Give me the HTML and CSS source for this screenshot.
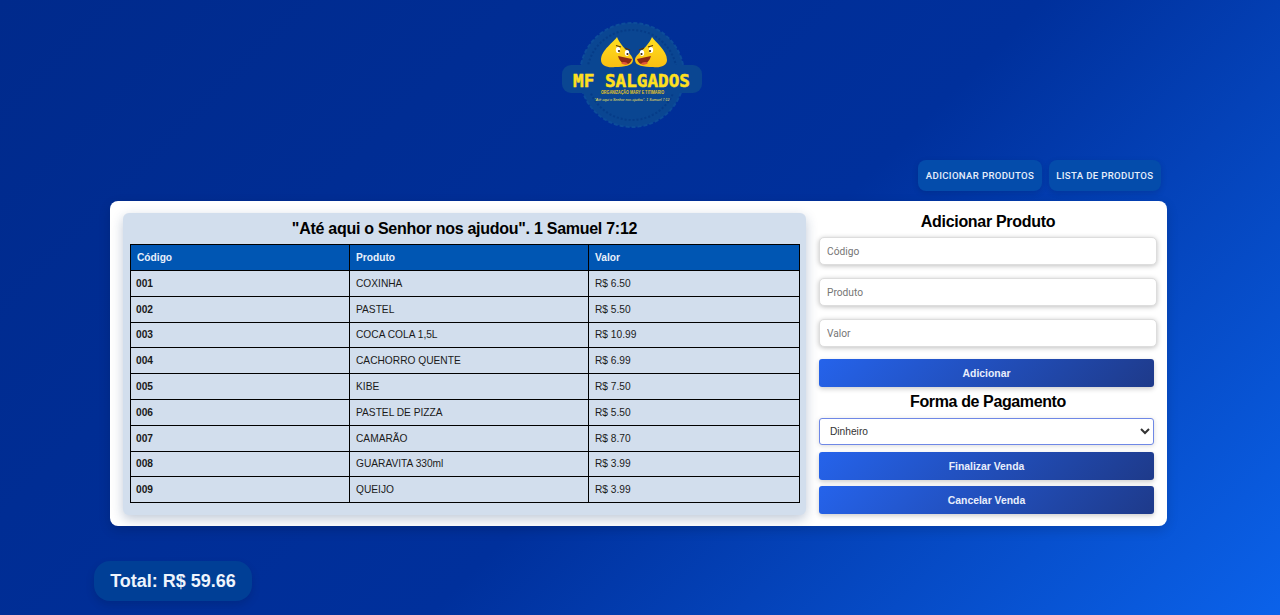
FILE: index.html
```html
<!DOCTYPE html>
<html lang="pt-BR">

<head>
  <meta charset="UTF-8">
  <meta name="viewport" content="width=device-width, initial-scale=1">
  <title>MF Salgados</title>
  <link rel="stylesheet" href="styles.css">
</head>

<body>
  <header class="logo-area">
    <svg class="logo" width="142" height="108" viewBox="0 0 142 108">
      <defs>
        <linearGradient id="dough" x1="0" y1="0" x2="0" y2="1">
          <stop offset="0" stop-color="#ffdf20"/>
          <stop offset="1" stop-color="#f9bf12"/>
        </linearGradient>
      </defs>
      <circle cx="71" cy="54" r="52" fill="#0a4692" stroke="#0c4c9a" stroke-width="2" stroke-dasharray="4 2"/>
      <circle cx="71" cy="54" r="45" fill="none" stroke="#063c88" stroke-width="2" stroke-dasharray="2 2"/>
      <rect x="1" y="44" width="140" height="28" rx="9" fill="#0a4692"/>
      <!-- salgados -->
      <path d="M56 16 C53 21 40 29 40 39 C40 45 47 47 54 46 C63 46 72 45 72 39 C72 33 61 28 56 16Z" fill="url(#dough)"/>
      <path d="M91 16 C94 21 106 29 106 39 C106 45 99 47 92 46 C83 46 74 45 74 39 C74 33 86 28 91 16Z" fill="url(#dough)"/>
      <ellipse cx="57" cy="29" rx="2.2" ry="3" fill="#fff"/>
      <ellipse cx="66" cy="32" rx="2.2" ry="3" fill="#fff"/>
      <ellipse cx="90" cy="29" rx="2.2" ry="3" fill="#fff"/>
      <ellipse cx="81" cy="32" rx="2.2" ry="3" fill="#fff"/>
      <circle cx="58" cy="30" r="1.1" fill="#3a2206"/>
      <circle cx="66.5" cy="33" r="1.1" fill="#3a2206"/>
      <circle cx="89" cy="30" r="1.1" fill="#3a2206"/>
      <circle cx="80.5" cy="33" r="1.1" fill="#3a2206"/>
      <path d="M55 24.5 L60 26 M64 27 L69 29" stroke="#5a3408" stroke-width="1.2" fill="none"/>
      <path d="M92 24.5 L87 26 M83 27 L78 29" stroke="#5a3408" stroke-width="1.2" fill="none"/>
      <path d="M57 35 L71 38 C69 46 60 45 57 35Z" fill="#8e2a16"/>
      <path d="M90 35 L76 38 C78 46 87 45 90 35Z" fill="#8e2a16"/>
      <path d="M60 42 C62 40 66 41 67 43 C65 44 62 44 60 42Z" fill="#e4573a"/>
      <path d="M87 42 C85 40 81 41 80 43 C82 44 85 44 87 42Z" fill="#e4573a"/>
      <text class="logo-title" x="70.5" y="66" text-anchor="middle" textLength="117" lengthAdjust="spacingAndGlyphs">MF SALGADOS</text>
      <text class="logo-sub" x="71.5" y="72.5" text-anchor="middle" textLength="63" lengthAdjust="spacingAndGlyphs">ORGANIZAÇÃO MARY E TITIMARIO</text>
      <text class="logo-verse" x="71" y="80" text-anchor="middle" textLength="75" lengthAdjust="spacingAndGlyphs">"Até aqui o Senhor nos ajudou". 1 Samuel 7:12</text>
    </svg>
  </header>

  <nav class="top-nav">
    <a class="nav-btn" href="#">ADICIONAR PRODUTOS</a>
    <a class="nav-btn" href="#">LISTA DE PRODUTOS</a>
  </nav>

  <main class="card">
    <section class="table-panel">
      <h2>"Até aqui o Senhor nos ajudou". 1 Samuel 7:12</h2>
      <table>
        <thead>
          <tr>
            <th class="col-code">Código</th>
            <th class="col-name">Produto</th>
            <th>Valor</th>
          </tr>
        </thead>
        <tbody>
          <tr><td class="code">001</td><td>COXINHA</td><td>R$ 6.50</td></tr>
          <tr><td class="code">002</td><td>PASTEL</td><td>R$ 5.50</td></tr>
          <tr><td class="code">003</td><td>COCA COLA 1,5L</td><td>R$ 10.99</td></tr>
          <tr><td class="code">004</td><td>CACHORRO QUENTE</td><td>R$ 6.99</td></tr>
          <tr><td class="code">005</td><td>KIBE</td><td>R$ 7.50</td></tr>
          <tr><td class="code">006</td><td>PASTEL DE PIZZA</td><td>R$ 5.50</td></tr>
          <tr><td class="code">007</td><td>CAMARÃO</td><td>R$ 8.70</td></tr>
          <tr><td class="code">008</td><td>GUARAVITA 330ml</td><td>R$ 3.99</td></tr>
          <tr><td class="code">009</td><td>QUEIJO</td><td>R$ 3.99</td></tr>
        </tbody>
      </table>
    </section>

    <section class="form-panel">
      <h2>Adicionar Produto</h2>
      <input type="text" placeholder="Código">
      <input type="text" placeholder="Produto">
      <input class="input-last" type="text" placeholder="Valor">
      <button class="btn btn-add">Adicionar</button>
      <h2 class="pay-title">Forma de Pagamento</h2>
      <select>
        <option>Dinheiro</option>
      </select>
      <button class="btn">Finalizar Venda</button>
      <button class="btn">Cancelar Venda</button>
    </section>
  </main>

  <div class="total">Total: R$ 59.66</div>
</body>

</html>
```

FILE: styles.css
```css
* {
  box-sizing: border-box;
  margin: 0;
  padding: 0;
}

html, body {
  height: 615px;
  overflow: hidden;
}

body {
  font-family: "Liberation Sans", Arial, sans-serif;
  background: linear-gradient(135deg, #002a8c 0%, #00309c 55%, #0b62ea 100%);
  color: #000;
}

.logo-area {
  display: flex;
  justify-content: center;
  padding: 21px 16px 0 0;
  height: 160px;
}

.logo-title {
  font-family: "DejaVu Sans Mono", monospace;
  font-size: 18px;
  font-weight: bold;
  fill: #ffe01f;
  stroke: #ffe01f;
  stroke-width: .5px;
}

.logo-sub {
  font-size: 4.5px;
  font-weight: bold;
  fill: #e8c61a;
}

.logo-verse {
  font-size: 4px;
  font-style: italic;
  fill: #f4e05a;
}

.top-nav {
  display: flex;
  justify-content: flex-end;
  gap: 7px;
  padding-right: 119px;
}

.nav-btn {
  font-family: Roboto, sans-serif;
  font-size: 9.6px;
  font-weight: 500;
  letter-spacing: .35px;
  line-height: 31px;
  height: 31px;
  padding: 0 7.5px;
  color: #e6eefb;
  text-decoration: none;
  background: #044cab;
  border-radius: 8px;
  box-shadow: 0 2px 6px rgba(0, 0, 0, .12);
}

.card {
  display: flex;
  gap: 13px;
  width: 1057px;
  height: 325px;
  margin: 10px 0 0 110px;
  padding: 12px 13px 11px;
  background: #fff;
  border-radius: 8px;
  box-shadow: 0 4px 12px rgba(0, 0, 0, .15);
}

.table-panel {
  width: 683px;
  height: 302px;
  padding: 7px 7px 0;
  background: #d2deed;
  border-radius: 6px;
  box-shadow: 0 4px 12px rgba(30, 60, 110, .28);
}

.table-panel h2 {
  font-size: 16px;
  letter-spacing: -.27px;
  line-height: 18px;
  height: 24px;
  text-align: center;
}

table {
  width: 670px;
  border-collapse: collapse;
  table-layout: fixed;
  font-size: 10.2px;
  color: #1a1a1a;
  border: 1px solid #000;
}

th, td {
  border: 1px solid #000;
  text-align: left;
  height: 25.8px;
  padding: 0 6px;
}

th {
  height: 26px;
  background: #0056b3;
  color: #e8f0fb;
  font-weight: bold;
}

.col-code {
  width: 219px;
}

.col-name {
  width: 239px;
}

.code {
  font-weight: bold;
  padding-left: 5px;
}

.form-panel {
  display: flex;
  flex-direction: column;
  width: 338px;
}

.form-panel > * {
  flex-shrink: 0;
}

.form-panel h2 {
  font-size: 16px;
  letter-spacing: -.3px;
  line-height: 18px;
  text-align: center;
}

input {
  width: 338px;
  height: 28px;
  margin: 6px 0 7px;
  padding: 0 7px;
  font-family: Roboto, sans-serif;
  font-size: 10.2px;
  background: #fff;
  border: 1px solid #ddd;
  border-radius: 5px;
  box-shadow: 0 1px 5px rgba(0, 0, 0, .25);
}

input::placeholder {
  color: #757575;
}

.input-last {
  margin-bottom: 12px;
}

.btn {
  width: 335px;
  height: 28px;
  font-family: "Liberation Sans", sans-serif;
  font-size: 10.4px;
  font-weight: bold;
  color: #e8eefc;
  background: linear-gradient(135deg, #2563eb, #1e3a8a);
  border: 0;
  border-radius: 3px;
  box-shadow: 0 2px 5px rgba(0, 0, 0, .2);
  margin-bottom: 6px;
}

.form-panel .pay-title {
  margin-bottom: 7px;
  letter-spacing: -.38px;
}

select {
  width: 335px;
  height: 27px;
  margin-bottom: 7px;
  padding: 0 6px;
  font-family: "Liberation Sans", sans-serif;
  font-size: 10.2px;
  color: #333;
  background: #fff;
  border: 1px solid #6f88e6;
  border-radius: 3px;
  box-shadow: 0 1px 5px rgba(0, 0, 0, .15);
}

.total {
  width: 158px;
  height: 40px;
  margin: 35px 0 0 94px;
  font-size: 18px;
  font-weight: bold;
  line-height: 40px;
  text-align: center;
  color: #eef4fc;
  background: #003f96;
  border-radius: 16px;
  box-shadow: 0 4px 10px rgba(0, 0, 0, .12);
}
```
